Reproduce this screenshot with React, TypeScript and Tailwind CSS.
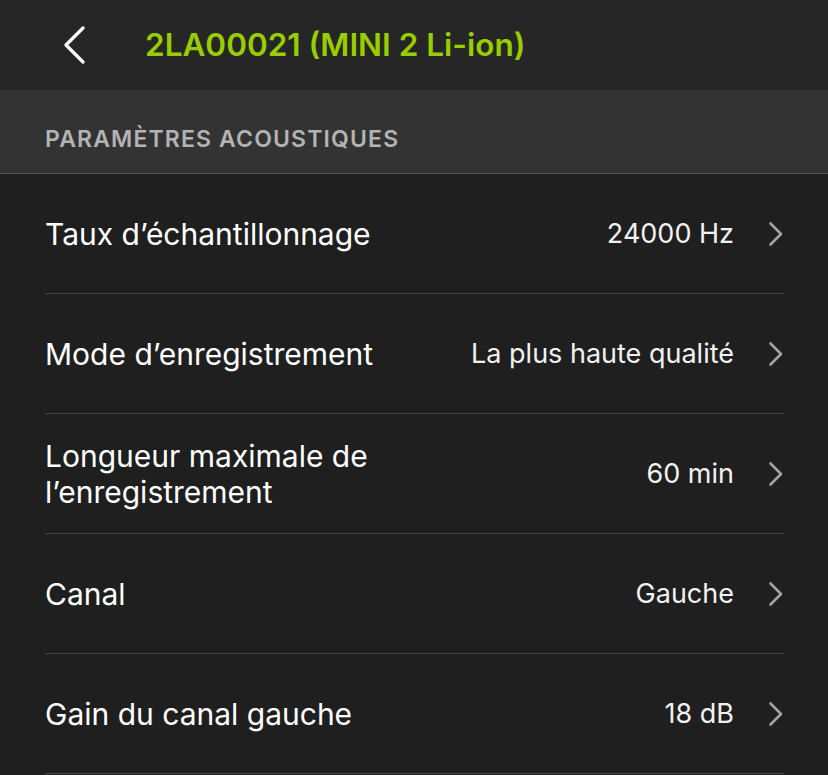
const rows = [
  { label: 'Taux d’échantillonnage', value: '24000 Hz' },
  { label: 'Mode d’enregistrement', value: 'La plus haute qualité' },
  { label: 'Longueur maximale de l’enregistrement', value: '60 min' },
  { label: 'Canal', value: 'Gauche' },
  { label: 'Gain du canal gauche', value: '18 dB' },
];

function ChevronRight() {
  return (
    <svg width="16" height="26" viewBox="0 0 16 26" fill="none" className="shrink-0">
      <path d="M2.5 2.5L13 13 2.5 23.5" stroke="#a3a3a3" strokeWidth="2.6" strokeLinecap="round" strokeLinejoin="round" />
    </svg>
  );
}

function ChevronLeft() {
  return (
    <svg width="24" height="38" viewBox="0 0 24 38" fill="none">
      <path d="M21 2L4 19l17 17" stroke="#ffffff" strokeWidth="3.2" strokeLinecap="round" strokeLinejoin="round" />
    </svg>
  );
}

export default function App() {
  return (
    <div className="min-h-screen w-full bg-[#1f1f1f] text-white" style={{ fontFamily: 'Inter, "Noto Sans", sans-serif' }}>
      <header className="flex h-[90px] items-center bg-[#262626]">
        <button className="ml-[62px] flex items-center">
          <ChevronLeft />
        </button>
        <h1 className="ml-[59px] text-[31.5px] font-semibold text-[#9acd00]">2LA00021 (MINI 2 Li-ion)</h1>
      </header>
      <div className="flex h-[84px] items-center border-b border-[#555555] bg-[#333333] px-[45px] pt-[16px]">
        <span className="text-[23px] font-semibold tracking-[0.05em] text-[#b3b3b3]">PARAMÈTRES ACOUSTIQUES</span>
      </div>
      <ul className="pl-[45px] pr-[44px]">
        {rows.map((r) => (
          <li key={r.label} className="flex h-[120px] items-center border-b border-[#444444]">
            <span className="max-w-[360px] flex-1 text-[30px] leading-[36px]">{r.label}</span>
            <span className="ml-auto pt-[2px] text-[27px] text-[#f2f2f2]">{r.value}</span>
            <span className="ml-[34px]"><ChevronRight /></span>
          </li>
        ))}
      </ul>
    </div>
  );
}
